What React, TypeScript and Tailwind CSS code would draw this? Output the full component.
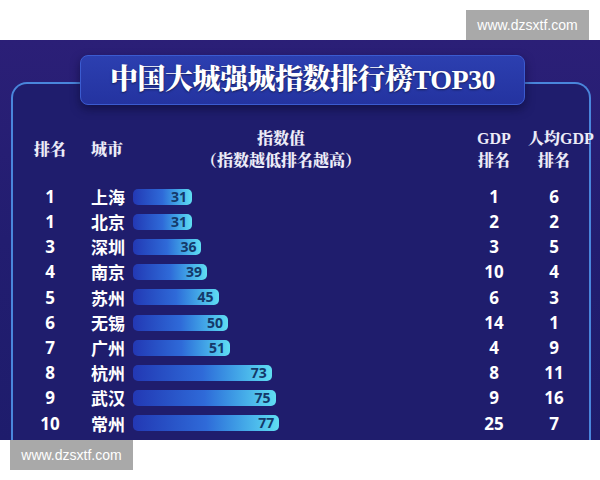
const rows = [
  { rank: 1, city: '上海', index: 31, gdp: 1, perCapita: 6 },
  { rank: 1, city: '北京', index: 31, gdp: 2, perCapita: 2 },
  { rank: 3, city: '深圳', index: 36, gdp: 3, perCapita: 5 },
  { rank: 4, city: '南京', index: 39, gdp: 10, perCapita: 4 },
  { rank: 5, city: '苏州', index: 45, gdp: 6, perCapita: 3 },
  { rank: 6, city: '无锡', index: 50, gdp: 14, perCapita: 1 },
  { rank: 7, city: '广州', index: 51, gdp: 4, perCapita: 9 },
  { rank: 8, city: '杭州', index: 73, gdp: 8, perCapita: 11 },
  { rank: 9, city: '武汉', index: 75, gdp: 9, perCapita: 16 },
  { rank: 10, city: '常州', index: 77, gdp: 25, perCapita: 7 },
]

const serif = "font-['Liberation_Serif','Noto_Serif_CJK_SC','Noto_Sans_CJK_SC',serif]"
const sans = "font-['Open_Sans','Noto_Sans_CJK_SC',sans-serif]"

function Watermark() {
  return (
    <div className="flex h-[30px] w-[123px] items-center justify-center bg-[#a9a9a9] font-['Liberation_Sans',sans-serif] text-[14px] text-white">
      www.dzsxtf.com
    </div>
  )
}

export default function App() {
  return (
    <div className="h-[480px] w-[600px] overflow-hidden bg-white">
      <div className="flex h-[40px] items-start justify-end pr-[11px] pt-[10px]">
        <Watermark />
      </div>

      <div className="flex h-[400px] flex-col overflow-hidden bg-gradient-to-b from-[#2b1f77] via-[#221d70] to-[#1e1c6c] pt-[15px]">
        {/* title */}
        <div className="relative z-10 ml-[80px] flex h-[50px] w-[445px] items-center justify-center rounded-[8px] border border-[#3b5bd0] bg-gradient-to-b from-[#2c3fb0] to-[#2433a0] shadow-[0_4px_10px_rgba(10,10,50,0.6)]">
          <span
            className={`${serif} text-[28px] font-black tracking-[-0.5px] text-white [text-shadow:0_1px_2px_rgba(0,0,0,0.5)]`}
          >
            中国大城强城指数排行榜TOP30
          </span>
        </div>

        {/* frame */}
        <div className="-mt-[23px] ml-[11px] mr-[9px] flex-1 rounded-t-[16px] border-2 border-b-0 border-[#4a86dc] bg-[#1f1d6d] pt-[43px]">
          <div className={`${serif} flex h-[46px] items-center whitespace-nowrap text-[16px] font-black leading-[22px] text-[#ecebf7]`}>
            <div className="w-[74px] text-center">排名</div>
            <div className="w-[46px] pl-[4px]">城市</div>
            <div className="w-[296px] text-center">
              <div>指数值</div>
              <div>（指数越低排名越高）</div>
            </div>
            <div className="ml-[31px] w-[68px] text-center">
              <div>GDP</div>
              <div>排名</div>
            </div>
            <div className="w-[52px] text-center">
              <div>人均GDP</div>
              <div>排名</div>
            </div>
          </div>

          <div className="mt-[11px] flex flex-col">
            {rows.map((row, i) => (
              <div key={i} className={`${sans} flex h-[25.2px] items-center text-[17px] font-bold text-white`}>
                <div className="w-[74px] text-center">{row.rank}</div>
                <div className="w-[46px] pl-[4px] font-['Noto_Sans_CJK_SC',sans-serif]">{row.city}</div>
                <div className="w-[327px]">
                  <div
                    className="flex h-[16px] items-center justify-end rounded-[5px] bg-gradient-to-r from-[#2338b4] via-[#2f6ad8] to-[#60def2] pr-[5px] text-[14px] leading-none text-[#14396a]"
                    style={{ width: row.index * 1.9 }}
                  >
                    {row.index}
                  </div>
                </div>
                <div className="w-[68px] text-center">{row.gdp}</div>
                <div className="w-[52px] text-center">{row.perCapita}</div>
              </div>
            ))}
          </div>
        </div>
      </div>

      <div className="pl-[10px]">
        <Watermark />
      </div>
    </div>
  )
}
